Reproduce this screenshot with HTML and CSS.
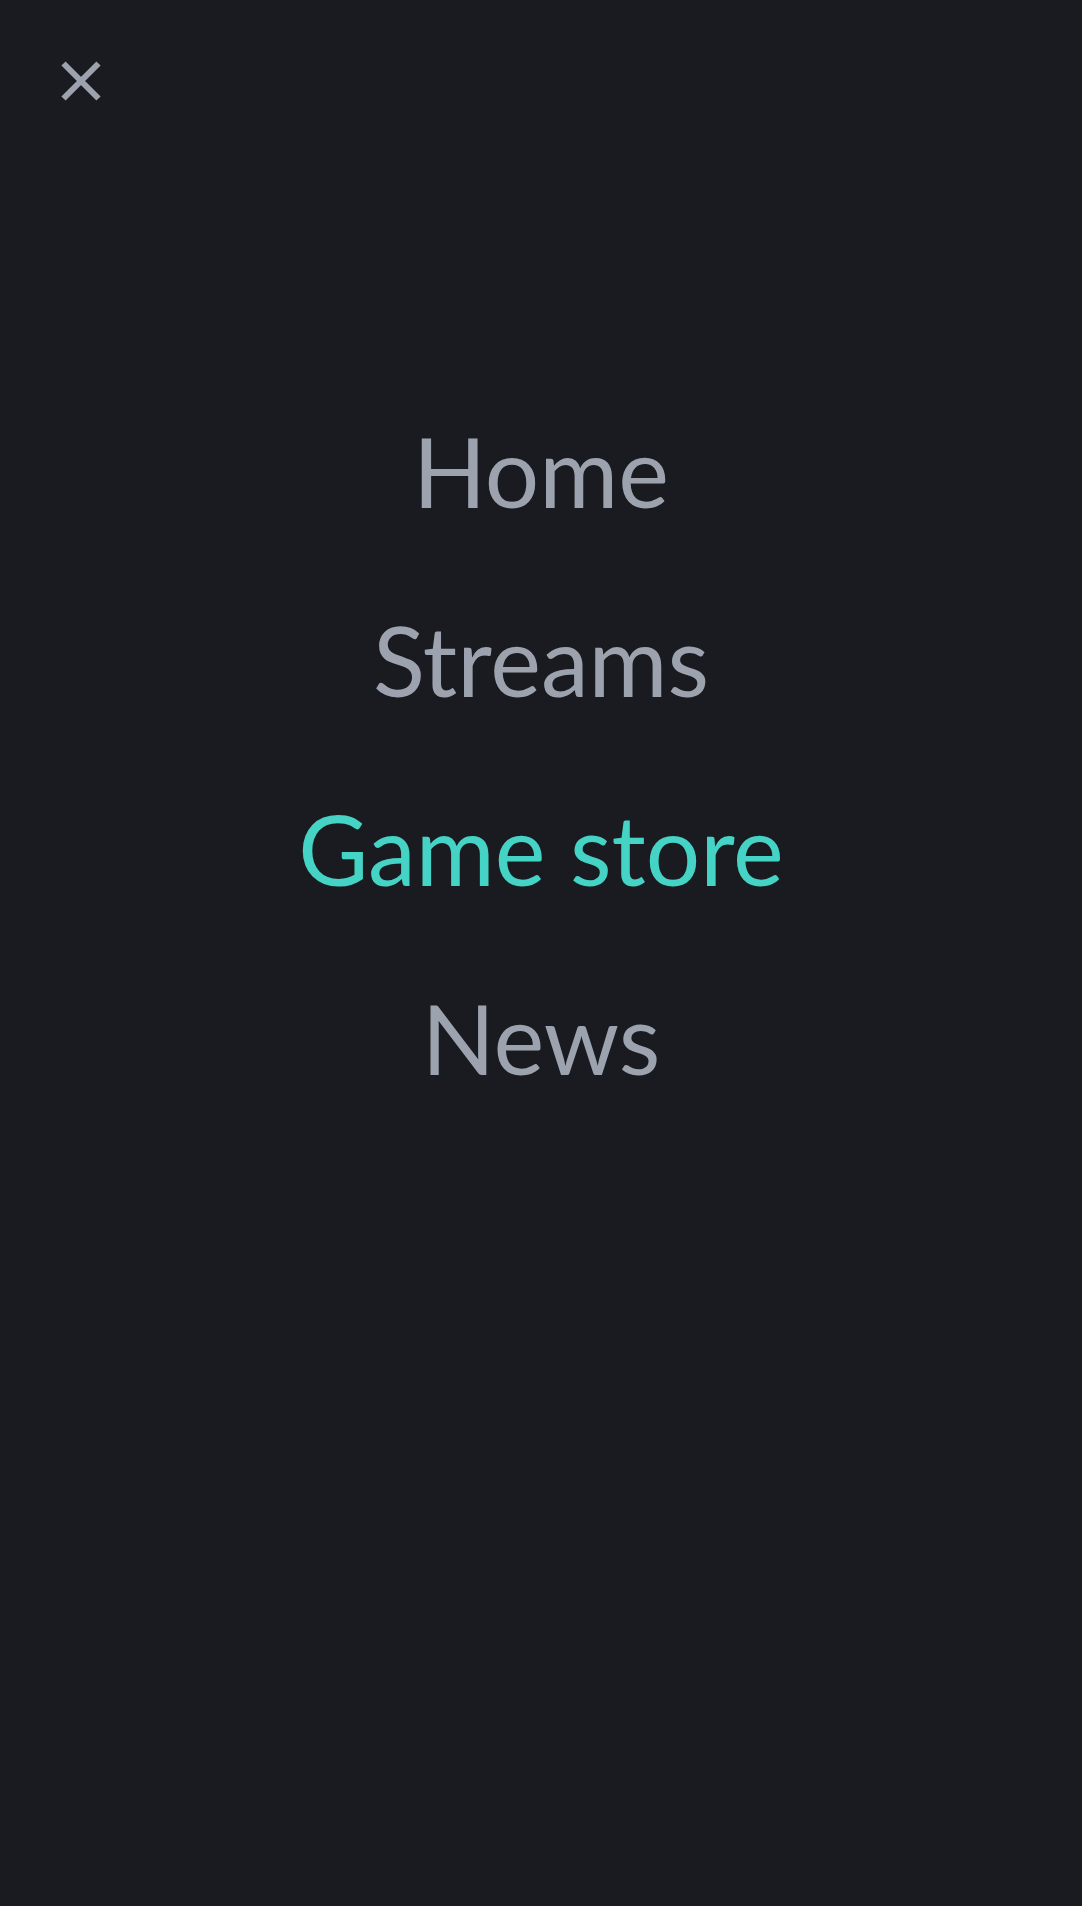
FILE: index.html
```html
<!DOCTYPE html>
<html lang="en">
<head>
<meta charset="utf-8">
<title>Menu</title>
<link rel="stylesheet" href="styles.css">
</head>
<body>
<div class="page">
  <header class="topbar">
    <button class="close" aria-label="Close menu">
      <svg width="48" height="48" viewBox="0 0 48 48" fill="none" stroke="currentColor" stroke-width="6" stroke-linecap="butt">
        <path d="M6.5 6.5L41.5 41.5M41.5 6.5L6.5 41.5"/>
      </svg>
    </button>
  </header>
  <nav class="menu">
    <a class="menu-item" href="#">Home</a>
    <a class="menu-item" href="#">Streams</a>
    <a class="menu-item active" href="#">Game store</a>
    <a class="menu-item" href="#">News</a>
  </nav>
</div>
</body>
</html>
```
FILE: styles.css
```css
* { box-sizing: border-box; }
html, body {
  margin: 0;
  padding: 0;
  background: #1a1b20;
}
body {
  font-family: Lato, "Open Sans", sans-serif;
  color: #9ca3af;
}
.page {
  min-height: 100vh;
}
.topbar {
  padding: 57px;
  display: flex;
}
.close {
  width: 48px;
  height: 48px;
  padding: 0;
  border: 0;
  background: none;
  color: #9ca3af;
  display: block;
  cursor: pointer;
}
.close svg { display: block; }
.menu {
  display: flex;
  flex-direction: column;
  align-items: center;
  gap: 93px;
  padding-top: 261px;
}
.menu-item {
  font-size: 96px;
  line-height: 96px;
  color: #9ca3af;
  text-decoration: none;
}
.menu-item.active {
  color: #44d3c4;
}
```
